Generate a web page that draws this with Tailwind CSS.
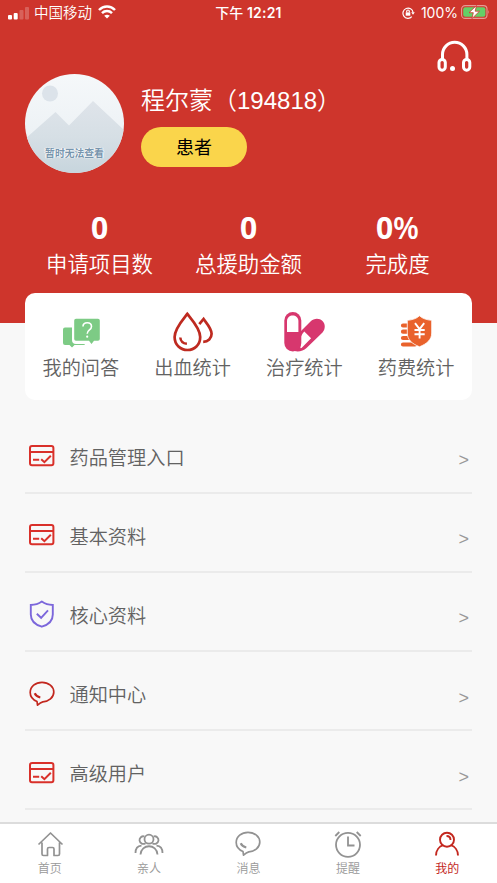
<!DOCTYPE html>
<html lang="zh-CN">
<head>
<meta charset="utf-8">
<title>我的</title>
<script src="https://cdn.jsdelivr.net/npm/@tailwindcss/browser@4"></script>
</head>
<body class="w-[497px] h-[883px] overflow-hidden bg-[#f8f8f8] font-['Liberation_Sans','Noto_Sans_CJK_SC',sans-serif] font-[350]">
<svg class="hidden">
  <symbol id="form" viewBox="0 0 26 22"><g fill="none" stroke="#d9302a" stroke-width="2"><rect x="1" y="1" width="23.4" height="19.3" rx="2"/><path d="M1 7h23.4M4 14.7h6.2"/><path d="M12.2 14.2l3.2 3 6.4-6.500"/></g></symbol>
  <symbol id="chat" viewBox="0 0 26 26"><g fill="none" stroke="currentColor" stroke-width="1.7" stroke-linejoin="round"><path d="M8 20.500C4 18.800 1.200 15.500 1.200 11.500 1.200 5.700 6.500 1.300 13 1.300s11.800 4.200 11.800 9.700-5.200 9.700-11 9.800c-1.700.4-3.400 1.600-5.300 3.400L8 20.500z"/><path d="M5.700 12.200c.9 2 2.800 3.500 5.600 4.200" stroke-width="2.100"/></g></symbol>
</svg>
<div class="flex flex-col w-[497px] h-[883px]">
  <header class="h-[322.500px] shrink-0 bg-[#ce352c] text-white">
    <div class="h-[26px] px-2 grid grid-cols-3 items-center text-[14.5px]">
      <div class="flex items-center">
        <svg width="22" height="13" viewBox="0 0 22 13" fill="#fff"><rect y="8" width="4" height="4.500" rx="1"/><rect x="5.700" y="6" width="4" height="6.500" rx="1"/><g opacity=".22"><rect x="11.500" y="3" width="4" height="9.500" rx="1"/><rect x="17" y="0" width="4" height="12.500" rx="1"/></g></svg>
        <span class="ml-[4px] pt-[2px] whitespace-nowrap">中国移动</span>
        <svg class="ml-[6px] -mt-[2px]" width="18" height="14" viewBox="0 0 18 14" fill="none" stroke="#fff" stroke-width="2.500"><path d="M1 5C5.500.4 12.500.4 17 5M4 8.200c2.800-2.800 7.200-2.800 10 0"/><path d="M9 13.500L6.200 10.700Q9 8.600 11.800 10.700z" fill="#fff" stroke="none"/></svg>
      </div>
      <div class="text-center font-medium whitespace-nowrap font-['Inter','Noto_Sans_CJK_SC',sans-serif] text-[14px] -mt-[2px]">下午 <span class="font-semibold tracking-[0.2px]">12:21</span></div>
      <div class="flex items-center justify-end">
        <svg width="13" height="12" viewBox="0 0 13 12" fill="none" stroke="#fff" stroke-width="1.200"><path d="M9.800 9.700A5.100 5.100 0 1 1 11.100 5.500"/><path d="M9.200 5.300h3.600L11 7.800z" fill="#fff" stroke="none"/><rect x="3.700" y="5.400" width="4.600" height="3.300" fill="#fff" stroke="none"/><path d="M4.700 5.500V4.300a1.300 1.300 0 0 1 2.600 0v1.200"/></svg>
        <span class="ml-[6px] -mt-[1px] font-['Inter',sans-serif] font-normal text-[14px]">100%</span>
        <svg class="ml-[3px] -mr-[1px] -mt-[2px]" width="29" height="14" viewBox="0 0 29 14"><rect x=".6" y=".6" width="25.400" height="12.800" rx="3.500" fill="none" stroke="#e69a94" stroke-width="1.100"/><path d="M27.400 5q1.400 2 0 4z" fill="#e69a94"/><rect x="2.200" y="2.200" width="22.200" height="9.600" rx="2" fill="#65cf67"/><path d="M15.500.5L8 7.700h4.300l-1.400 6L18.500 6.200h-4.300z" fill="#fff" stroke="#ce352c" stroke-width=".8"/></svg>
      </div>
    </div>
    <div class="h-[48px] flex justify-end pr-[25.500px] pt-[14px]">
      <svg width="35" height="33" viewBox="0 0 35 33" fill="none" stroke="#fff" stroke-width="3"><path d="M5.500 19V14.500a12.200 12.200 0 0 1 24.400 0V19"/><rect x="2" y="19.400" width="6.300" height="10.800" rx="3.100"/><rect x="26.500" y="19.400" width="6.300" height="10.800" rx="3.100"/><circle cx="15.500" cy="28.500" r="2.500" fill="#fff" stroke="none"/></svg>
    </div>
    <div class="flex pl-[25px] h-[99px]">
      <div class="relative size-[99px] rounded-full overflow-hidden shrink-0">
        <svg width="99" height="99" viewBox="0 0 99 99"><defs><linearGradient id="sky" x2="0" y2="1"><stop stop-color="#f5f8fa"/><stop offset="1" stop-color="#e8eef2"/></linearGradient><linearGradient id="hill" x2="0" y2="1"><stop stop-color="#dfe4ea"/><stop offset=".5" stop-color="#d6dfe5"/><stop offset="1" stop-color="#c7d5dd"/></linearGradient></defs><rect width="99" height="99" fill="url(#sky)"/><circle cx="25" cy="19.500" r="8" fill="#dce3ea"/><path d="M0 65L30.500 38 44 51.500 68 27l31 29v43H0z" fill="url(#hill)"/></svg>
        <div class="absolute inset-x-0 top-[72px] text-center text-[9.800px] leading-[15px] font-bold text-[#7795ad] [text-shadow:0_0_1px_#fff,1px_0_1px_#fff,-1px_0_1px_#fff]">暂时无法查看</div>
      </div>
      <div class="pl-[17px]">
        <div class="h-[53px] pt-[9px] text-[24px] leading-[36px] whitespace-nowrap">程尔蒙（194818）</div>
        <div class="w-[106px] h-[40px] rounded-full bg-[#fad54b] text-black text-[18px] leading-[42px] text-center font-normal">患者</div>
      </div>
    </div>
    <div class="grid grid-cols-3 px-[25px] pt-[37px] text-center">
      <div><div class="text-[30px] leading-[36px] font-bold font-['Open_Sans',sans-serif]">0</div><div class="pt-[2px] text-[21.400px] leading-[34px]">申请项目数</div></div>
      <div><div class="text-[30px] leading-[36px] font-bold font-['Open_Sans',sans-serif]">0</div><div class="pt-[2px] text-[21.400px] leading-[34px]">总援助金额</div></div>
      <div><div class="text-[30px] leading-[36px] font-semibold font-['Open_Sans',sans-serif]"><span class="font-bold">0</span>%</div><div class="pt-[2px] text-[21.400px] leading-[34px]">完成度</div></div>
    </div>
  </header>
  <section class="relative -mt-[29.500px] mx-[25px] h-[106.500px] shrink-0 bg-white rounded-[10px] grid grid-cols-4 pt-[17px] text-[#626262] text-[19.2px] leading-[32px] text-center">
    <div class="flex flex-col items-center">
      <svg width="44" height="42" viewBox="0 0 44 42"><path d="M6 17.500h7V30q0 4 4 4h9q0 1-1.500 1h-9L13 37.500 10.500 35H6q-2 0-2-2V19.500q0-2 2-2z" fill="#7dcb85"/><path d="M17 8.700h22q1.800 0 1.800 1.800v18.500q0 1.800-1.800 1.800h-4L32.500 34 30 30.800H17q-1.800 0-1.800-1.800V10.500q0-1.800 1.800-1.800z" fill="#7dcb85"/><path d="M24 16.500c0-5 8.500-5 8.500 0 0 3.500-4.300 3.500-4.300 7.300" fill="none" stroke="#fff" stroke-width="1.600"/><circle cx="28.200" cy="26.700" r="1.100" fill="#fff"/></svg>
      <span class="pt-px">我的问答</span>
    </div>
    <div class="flex flex-col items-center">
      <svg width="44" height="42" viewBox="0 0 44 42" fill="none" stroke="#be2a20" stroke-width="2.700"><path d="M16.300 3.900C12 9.500 3.600 18.500 3.600 27c0 8 6 13 12.900 13s12.700-5 12.700-13c0-8.500-8.400-17.500-12.900-23.100z"/><path d="M28.300 14.200L32.600 9c2.800 4 8 9.500 8 14.800 0 4.700-3.500 8-8.400 8.100"/><path d="M9.300 27.500c.3 3.800 2.800 5.900 6.600 6.300" stroke-width="2.500"/></svg>
      <span class="pt-px">出血统计</span>
    </div>
    <div class="flex flex-col items-center">
      <svg width="44" height="42" viewBox="0 0 44 42"><path d="M18 22L28.500 11.500c3.500-3.500 9-3.500 12-.5s3 8 0 11.500L24.500 38c-3 3-8 4-12 3z" fill="#d7376e"/><path d="M22.300 21.600l6.800 6.600-9.300 9.600c-.8.700-1.500.5-1.400-.5V29c.3-2.500 1.700-5 3.900-7.400z" fill="#fff"/><rect x="2.300" y="2" width="17" height="39.500" rx="8.500" fill="#d7376e"/><path d="M5 22V11c0-7.500 11.400-7.500 11.400 0v11z" fill="#fff"/></svg>
      <span class="pt-px">治疗统计</span>
    </div>
    <div class="flex flex-col items-center">
      <svg width="44" height="42" viewBox="0 0 44 42"><g stroke="#e9622c" stroke-width="4.200" stroke-linecap="round"><path d="M9 15.500h7M9 21.700h8M9 28h8M9 34.500h12"/></g><path d="M25.500 5.800c3.500 3.200 8 4.200 12.200 4.500V23c0 6.500-4.300 10.500-12.200 13.800C17.500 33.500 13.300 29.500 13.300 23V10.300c4.200-.3 8.700-1.300 12.200-4.500z" fill="#e9622c" stroke="#fff" stroke-width=".8"/><path d="M21 13.200l4.600 6 4.600-6M25.600 19v9.500M20.500 20h10.200M20.500 24.200h10.200" fill="none" stroke="#fff" stroke-width="1.900"/></svg>
      <span class="pt-px">药费统计</span>
    </div>
  </section>
  <main class="px-[25px] pt-[15px] flex-1 min-h-0 overflow-hidden text-[#626262] text-[19.200px]">
    <div class="h-[79.200px] border-b-2 border-[#ebebeb] flex items-center pl-1 pr-[3px] pt-[9px]">
      <svg class="-mt-[3px]" width="26" height="22"><use href="#form"/></svg><span class="ml-[14.500px] pt-[3px] flex-1">药品管理入口</span><span class="text-[18px] pt-[6px] text-[#999]">&gt;</span>
    </div>
    <div class="h-[79.200px] border-b-2 border-[#ebebeb] flex items-center pl-1 pr-[3px] pt-[9px]">
      <svg class="-mt-[3px]" width="26" height="22"><use href="#form"/></svg><span class="ml-[14.500px] pt-[3px] flex-1">基本资料</span><span class="text-[18px] pt-[6px] text-[#999]">&gt;</span>
    </div>
    <div class="h-[79.200px] border-b-2 border-[#ebebeb] flex items-center pl-1 pr-[3px] pt-[9px]">
      <svg class="-mt-[3px]" width="26" height="28" viewBox="0 0 26 28" fill="none" stroke="#7c67db" stroke-width="1.900"><path d="M12.800 1.600C9.500 4 5.500 5 1.800 5v9.500c0 6 4.500 10.300 11 12.200 6.500-1.900 11-6.200 11-12.200V5c-3.700 0-7.700-1-11-3.400z"/><path d="M7.800 13.800l4.300 4 6.900-7.500"/></svg><span class="ml-[14.500px] pt-[3px] flex-1">核心资料</span><span class="text-[18px] pt-[6px] text-[#999]">&gt;</span>
    </div>
    <div class="h-[79.200px] border-b-2 border-[#ebebeb] flex items-center pl-1 pr-[3px] pt-[9px]">
      <svg class="-mt-[3px] text-[#c2271e]" width="26" height="26"><use href="#chat"/></svg><span class="ml-[14.500px] pt-[3px] flex-1">通知中心</span><span class="text-[18px] pt-[6px] text-[#999]">&gt;</span>
    </div>
    <div class="h-[79.200px] border-b-2 border-[#ebebeb] flex items-center pl-1 pr-[3px] pt-[9px]">
      <svg class="-mt-[3px]" width="26" height="22"><use href="#form"/></svg><span class="ml-[14.500px] pt-[3px] flex-1">高级用户</span><span class="text-[18px] pt-[6px] text-[#999]">&gt;</span>
    </div>
  </main>
  <nav class="h-[61px] shrink-0 bg-white border-t-2 border-[#dcdcdc] grid grid-cols-5 pt-[6px] text-[12px] leading-[20px] text-[#999]">
    <div class="flex flex-col items-center">
      <svg width="30" height="29" viewBox="0 0 30 29" fill="none" stroke="#929292" stroke-width="1.700" stroke-linejoin="round"><path d="M3.500 14.500L15.500 3l12 11.500M7 12.500V24q0 1.500 1.500 1.500h4V19q0-1.500 1.500-1.500h3.500q1.500 0 1.500 1.500v6.500h4q1.500 0 1.500-1.500V12.500"/></svg><span>首页</span>
    </div>
    <div class="flex flex-col items-center">
      <svg width="30" height="29" viewBox="0 0 30 29" fill="none" stroke="#929292" stroke-width="1.800"><circle cx="15" cy="9.200" r="4.500"/><path d="M10.500 6.500a3.800 3.800 0 1 0 1 6.700M19.500 6.500a3.800 3.800 0 1 1-1 6.700M6.500 24.500c.5-11 16.500-11 17 0M1.500 23c0-4.500 2.500-7 6-7.300M28.500 23c0-4.500-2.500-7-6-7.300"/></svg><span>亲人</span>
    </div>
    <div class="flex flex-col items-center">
      <svg class="mt-[1px] mb-[2px] text-[#929292]" width="26" height="26"><use href="#chat"/></svg><span>消息</span>
    </div>
    <div class="flex flex-col items-center">
      <svg width="30" height="29" viewBox="0 0 30 29" fill="none" stroke="#929292" stroke-width="1.800"><circle cx="15" cy="14.800" r="12"/><path d="M15 6.500v9h6.500M2.300 6l4-4M27.700 6l-4-4"/></svg><span>提醒</span>
    </div>
    <div class="flex flex-col items-center text-[#c3271e]">
      <svg width="30" height="29" viewBox="0 0 30 29" fill="none" stroke="#c3271e" stroke-width="1.900"><circle cx="15" cy="9.700" r="7"/><path d="M14.500 6c2.500 0 4 1.500 4 4M4 25.500c0-4.800 3-9 7.300-10.300M26 25.500c0-4.800-3-9-7.300-10.300"/></svg><span class="font-normal">我的</span>
    </div>
  </nav>
</div>
</body>
</html>
